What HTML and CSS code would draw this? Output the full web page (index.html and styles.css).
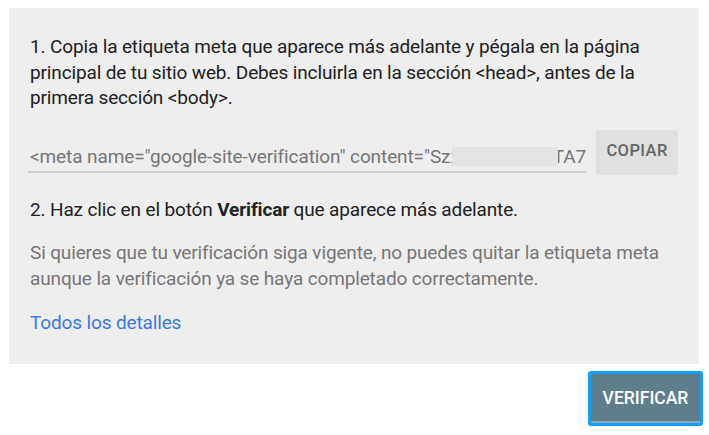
FILE: index.html
```html
<!DOCTYPE html>
<html lang="es">
<head>
<meta charset="utf-8">
<link rel="stylesheet" href="styles.css">
</head>
<body>
<div class="page">
  <section class="panel">
    <p class="step">1. Copia la etiqueta meta que aparece más adelante y pégala en la página principal de tu sitio web. Debes incluirla en la sección &lt;head&gt;, antes de la primera sección &lt;body&gt;.</p>
    <div class="meta-row">
      <div class="meta-field"><span class="meta-text">&lt;meta name="google-site-verification" content="Szx</span><span class="redact"></span><span class="meta-text">TA7</span></div>
      <button class="copy-btn">COPIAR</button>
    </div>
    <p class="step step2">2. Haz clic en el botón <b>Verificar</b> que aparece más adelante.</p>
    <p class="note">Si quieres que tu verificación siga vigente, no puedes quitar la etiqueta meta aunque la verificación ya se haya completado correctamente.</p>
    <a class="details" href="#">Todos los detalles</a>
  </section>
  <div class="actions">
    <button class="verify-btn">VERIFICAR</button>
  </div>
</div>
</body>
</html>
```
FILE: styles.css
```css
html, body {
  margin: 0;
  padding: 0;
  background: #ffffff;
}
body {
  font-family: Roboto, "Liberation Sans", sans-serif;
  color: #212121;
}
.page {
  padding: 8px 10px 0 9px;
}
.panel {
  background: #eeeeee;
  padding: 26px 21px 21px 21px;
  height: 356px;
  box-sizing: border-box;
}
.step {
  margin: 0;
  font-size: 19px;
  line-height: 25.5px;
  letter-spacing: -0.14px;
  color: #212121;
}
.meta-row {
  display: flex;
  align-items: flex-start;
  margin-top: 19px;
}
.meta-field {
  display: flex;
  align-items: center;
  width: 559px;
  margin-left: -2px;
  margin-top: 13px;
  padding-left: 2px;
  border-bottom: 2px solid #d0d0d0;
  height: 30px;
  box-sizing: border-box;
  overflow: hidden;
  white-space: nowrap;
}
.meta-text {
  font-size: 19px;
  color: #777777;
  line-height: 24px;
  letter-spacing: -0.1px;
}
.redact {
  position: relative;
  flex: none;
  width: 106px;
  height: 19px;
  margin-left: -8px;
  margin-right: -5px;
  background: #e3e3e3;
}
.copy-btn {
  margin-left: 10px;
  width: 82px;
  height: 45px;
  border: none;
  border-radius: 3px;
  background: #e0e0e0;
  color: #666666;
  font-family: Roboto, "Liberation Sans", sans-serif;
  font-size: 16.5px;
  font-weight: 500;
  letter-spacing: 0.4px;
  padding: 0 0 3px 0;
}
.step2 {
  margin-top: 22px;
}
.note {
  margin: 18px 0 0 0;
  font-size: 19px;
  line-height: 25.5px;
  letter-spacing: -0.14px;
  color: #777777;
}
.details {
  display: inline-block;
  margin-top: 19px;
  font-size: 19px;
  line-height: 25.5px;
  letter-spacing: -0.14px;
  color: #3b78e7;
  text-decoration: none;
}
.actions {
  display: flex;
  justify-content: flex-end;
  padding-top: 7px;
  margin-right: -4px;
}
.verify-btn {
  width: 115px;
  height: 55px;
  border: 3px solid #13a1fb;
  border-radius: 3px;
  background: #607d8b;
  box-shadow: inset 0 -2px 0 #8fa5b0;
  color: #ffffff;
  font-family: Roboto, "Liberation Sans", sans-serif;
  font-size: 17.5px;
  font-weight: 500;
  padding: 0 0 2px 0;
}
```
